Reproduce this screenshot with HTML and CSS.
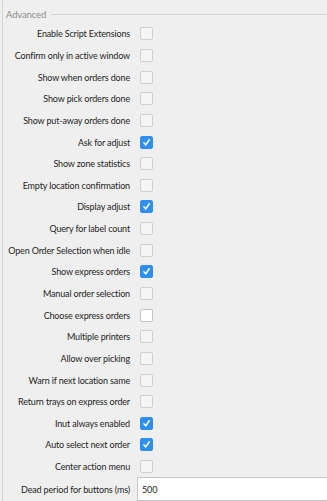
FILE: index.html
```html
<!DOCTYPE html>
<html>
<head>
<meta charset="utf-8">
<link rel="stylesheet" href="styles.css">
</head>
<body>
<div class="group">
  <div class="legend"><span class="legend-text">Advanced</span><span class="legend-line"></span></div>
  <div class="form">
    <div class="row"><span class="label">Enable Script Extensions</span><span class="cb"></span></div>
    <div class="row"><span class="label">Confirm only in active window</span><span class="cb"></span></div>
    <div class="row"><span class="label">Show when orders done</span><span class="cb"></span></div>
    <div class="row"><span class="label">Show pick orders done</span><span class="cb"></span></div>
    <div class="row"><span class="label">Show put-away orders done</span><span class="cb"></span></div>
    <div class="row"><span class="label">Ask for adjust</span><span class="cb checked"><svg viewBox="0 0 12 12"><path d="M3.2 6.4 L5.2 8.6 L9 3" fill="none" stroke="#fff" stroke-width="1.6" stroke-linecap="round" stroke-linejoin="round"/></svg></span></div>
    <div class="row"><span class="label">Show zone statistics</span><span class="cb"></span></div>
    <div class="row"><span class="label">Empty location confirmation</span><span class="cb"></span></div>
    <div class="row"><span class="label">Display adjust</span><span class="cb checked"><svg viewBox="0 0 12 12"><path d="M3.2 6.4 L5.2 8.6 L9 3" fill="none" stroke="#fff" stroke-width="1.6" stroke-linecap="round" stroke-linejoin="round"/></svg></span></div>
    <div class="row"><span class="label">Query for label count</span><span class="cb"></span></div>
    <div class="row"><span class="label">Open Order Selection when idle</span><span class="cb"></span></div>
    <div class="row"><span class="label">Show express orders</span><span class="cb checked"><svg viewBox="0 0 12 12"><path d="M3.2 6.4 L5.2 8.6 L9 3" fill="none" stroke="#fff" stroke-width="1.6" stroke-linecap="round" stroke-linejoin="round"/></svg></span></div>
    <div class="row"><span class="label">Manual order selection</span><span class="cb"></span></div>
    <div class="row"><span class="label">Choose express orders</span><span class="cb enabled"></span></div>
    <div class="row"><span class="label">Multiple printers</span><span class="cb"></span></div>
    <div class="row"><span class="label">Allow over picking</span><span class="cb"></span></div>
    <div class="row"><span class="label">Warn if next location same</span><span class="cb"></span></div>
    <div class="row"><span class="label">Return trays on express order</span><span class="cb"></span></div>
    <div class="row"><span class="label">Inut always enabled</span><span class="cb checked"><svg viewBox="0 0 12 12"><path d="M3.2 6.4 L5.2 8.6 L9 3" fill="none" stroke="#fff" stroke-width="1.6" stroke-linecap="round" stroke-linejoin="round"/></svg></span></div>
    <div class="row"><span class="label">Auto select next order</span><span class="cb checked"><svg viewBox="0 0 12 12"><path d="M3.2 6.4 L5.2 8.6 L9 3" fill="none" stroke="#fff" stroke-width="1.6" stroke-linecap="round" stroke-linejoin="round"/></svg></span></div>
    <div class="row"><span class="label">Center action menu</span><span class="cb"></span></div>
    <div class="row input-row"><span class="label">Dead period for buttons (ms)</span><span class="field">500</span></div>
  </div>
</div>
</body>
</html>
```

FILE: styles.css
```css
html, body {
  margin: 0;
  padding: 0;
  background: #efefef;
}
body {
  font-family: Lato, "Noto Sans", sans-serif;
  font-size: 9px;
  letter-spacing: -0.15px;
  color: #1e1e1e;
  width: 327px;
  height: 501px;
  overflow: hidden;
}
.group {
  margin-left: 2px;
  border-left: 1px solid #d4d4d4;
  height: 501px;
}
.legend {
  display: flex;
  align-items: center;
  height: 14px;
  padding-top: 7px;
  padding-left: 3px;
}
.legend-text {
  color: #8e8e8e;
  font-size: 9.5px;
}
.legend-line {
  flex: 1;
  height: 1px;
  background: #d4d4d4;
  margin-left: 5px;
}
.form {
  display: flex;
  flex-direction: column;
  padding-top: 2px;
}
.row {
  display: grid;
  grid-template-columns: 127px 1fr;
  column-gap: 10px;
  align-items: center;
  height: 21.65px;
}
.label {
  text-align: right;
  white-space: nowrap;
}
.cb {
  width: 11px;
  height: 11px;
  border: 1px solid #cfcfcf;
  border-radius: 2px;
  background: #f5f5f5;
  display: flex;
}
.cb.enabled {
  background: #fff;
  border-color: #c4c4c4;
}
.cb.checked {
  background: #2f8ff0;
  border-color: #2f8ff0;
}
.cb svg {
  width: 11px;
  height: 11px;
}
.input-row {
  height: 24px;
  column-gap: 7px;
}
.field {
  height: 22px;
  background: #fff;
  border: 1px solid #c6c6c6;
  border-right: none;
  display: flex;
  align-items: center;
  padding-left: 4px;
}
```
